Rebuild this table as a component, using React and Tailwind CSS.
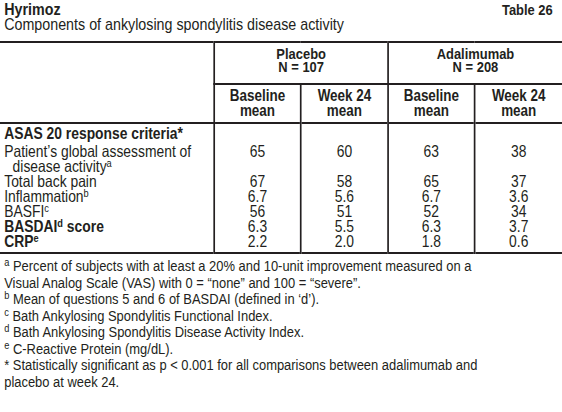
function Sup({ children, bold }) {
  return (
    <span className={`relative top-[-5px] text-[11px] leading-none ${bold ? "font-bold" : "font-normal"}`}>{children}</span>
  );
}

export default function App() {
  const font = { fontFamily: '"Liberation Sans", Arial, sans-serif' };
  const rows = [
    { label: <span className="font-bold">ASAS 20 response criteria*</span>, vals: ["", "", "", ""] },
    {
      label: (
        <>
          <div>Patient’s global assessment of</div>
          <div className="pl-[10px]">disease activity<Sup>a</Sup></div>
        </>
      ),
      vals: ["65", "60", "63", "38"],
    },
    { label: "Total back pain", vals: ["67", "58", "65", "37"] },
    { label: <>Inflammation<Sup>b</Sup></>, vals: ["6.7", "5.6", "6.7", "3.6"] },
    { label: <>BASFI<Sup>c</Sup></>, vals: ["56", "51", "52", "34"] },
    { label: <span className="font-bold">BASDAI<Sup bold>d</Sup> score</span>, vals: ["6.3", "5.5", "6.3", "3.7"] },
    { label: <span className="font-bold">CRP<Sup bold>e</Sup></span>, vals: ["2.2", "2.0", "1.8", "0.6"] },
  ];
  const fn = [
    [<Sup>a</Sup>, " Percent of subjects with at least a 20% and 10-unit improvement measured on a"],
    [null, "Visual Analog Scale (VAS) with 0 = “none” and 100 = “severe”."],
    [<Sup>b</Sup>, " Mean of questions 5 and 6 of BASDAI (defined in ‘d’)."],
    [<Sup>c</Sup>, " Bath Ankylosing Spondylitis Functional Index."],
    [<Sup>d</Sup>, " Bath Ankylosing Spondylitis Disease Activity Index."],
    [<Sup>e</Sup>, " C-Reactive Protein (mg/dL)."],
    [null, "* Statistically significant as p < 0.001 for all comparisons between adalimumab and"],
    [null, "placebo at week 24."],
  ];
  const line = "border-[#231f20]";
  return (
    <div className="w-[562px] h-[412px] bg-white text-[#231f20] overflow-hidden" style={font}>
      <div className="w-[669px] scale-x-[0.84] origin-top-left">
        <div className="px-[5px] pt-[2px]">
          <div className="flex justify-between items-end leading-[15px]">
            <span className="font-bold text-[17px]">Hyrimoz</span>
            <span className="font-bold text-[15.4px] pr-[6px]">Table 26</span>
          </div>
          <div className="text-[17px] leading-[15px]">Components of ankylosing spondylitis disease activity</div>
        </div>
        <table className="mt-[9px] w-[669px] border-collapse table-fixed text-[16.5px] leading-[15px]">
          <colgroup>
            <col className="w-[255px]" />
            <col className="w-[103px]" />
            <col className="w-[104px]" />
            <col className="w-[103px]" />
            <col className="w-[104px]" />
          </colgroup>
          <thead>
            <tr className={`border-t-2 ${line}`}>
              <th rowSpan={2} className={`border-r-2 border-b-2 ${line}`}></th>
              <th colSpan={2} className={`border-r-2 border-b-2 ${line} pt-[4px] pb-[10px] font-bold text-[15.4px] leading-[13px] align-top`}>
                <div>Placebo</div>
                <div>N = 107</div>
              </th>
              <th colSpan={2} className={`border-b-2 ${line} pt-[4px] pb-[10px] font-bold text-[15.4px] leading-[13px] align-top`}>
                <div>Adalimumab</div>
                <div>N = 208</div>
              </th>
            </tr>
            <tr className={`border-b-2 ${line}`}>
              <th className={`border-r-2 ${line} pt-[3px] pb-[4px] font-bold text-[16px] leading-[15px]`}>Baseline<br />mean</th>
              <th className={`border-r-2 ${line} pt-[3px] pb-[4px] font-bold text-[16px] leading-[15px]`}>Week 24<br />mean</th>
              <th className={`border-r-2 ${line} pt-[3px] pb-[4px] font-bold text-[16px] leading-[15px]`}>Baseline<br />mean</th>
              <th className="pt-[3px] pb-[4px] font-bold text-[16px] leading-[15px]">Week 24<br />mean</th>
            </tr>
          </thead>
          <tbody className={`border-b-2 ${line}`}>
            {rows.map((r, i) => (
              <tr key={i}>
                <td className={`border-r-2 ${line} pl-[5px] align-top whitespace-nowrap ${i === 0 ? "pt-[2px] pb-[3px]" : ""} ${i === rows.length - 1 ? "pb-[3px]" : ""}`}>{r.label}</td>
                {r.vals.map((v, j) => (
                  <td key={j} className={`text-center align-top ${j < 3 ? `border-r-2 ${line}` : ""} ${i === 0 ? "pt-[2px]" : ""}`}>{v}</td>
                ))}
              </tr>
            ))}
          </tbody>
        </table>
        <div className="px-[5px] pt-[4px] text-[15.4px] leading-[16.5px] whitespace-nowrap">
          {fn.map((f, i) => (
            <div key={i}>{f[0]}{f[1]}</div>
          ))}
        </div>
      </div>
    </div>
  );
}
